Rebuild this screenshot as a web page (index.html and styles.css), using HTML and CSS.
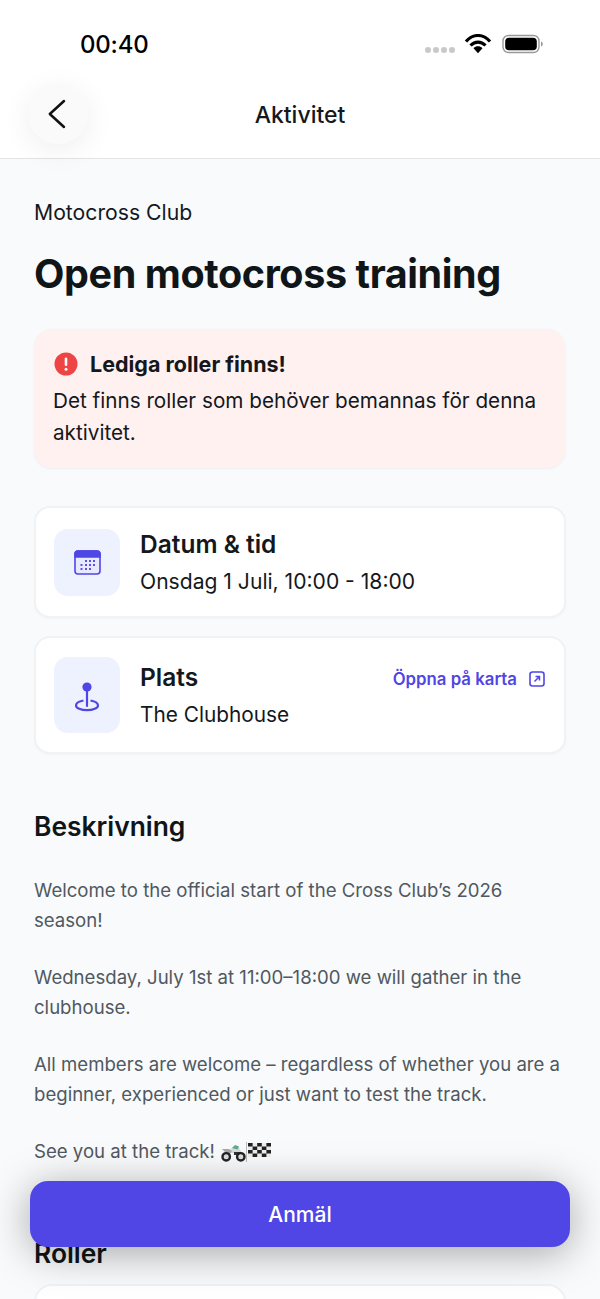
FILE: index.html
```html
<!DOCTYPE html>
<html lang="sv">
<head>
<meta charset="utf-8">
<title>Aktivitet</title>
<link rel="stylesheet" href="styles.css">
</head>
<body>
<div class="screen">
  <header class="top">
    <div class="status">
      <span class="time">00:40</span>
      <div class="status-icons">
        <span class="signal"><i></i><i></i><i></i><i></i></span>
        <svg class="wifi" width="28" height="20" viewBox="0 0 28 20"><path d="M2 7.500C9-.5 19-.5 26 7.500" fill="none" stroke="#000" stroke-width="3.200"/><path d="M6.500 11.500c4.500-4.600 10.500-4.600 15 0" fill="none" stroke="#000" stroke-width="3.200"/><path d="M9.500 14.300c2.800-2.600 6.200-2.600 9 0L14 19.200z" fill="#000"/></svg>
        <svg class="battery" width="42" height="20" viewBox="0 0 42 20"><rect x="1" y="1.500" width="36" height="17" rx="5.500" fill="none" stroke="#999" stroke-width="1.400"/><rect x="3.200" y="3.700" width="31.600" height="12.600" rx="3.800" fill="#000"/><path d="M39 7.500c1.300.4 1.800 1.300 1.800 2.500s-.5 2.100-1.800 2.500z" fill="#999"/></svg>
      </div>
    </div>
    <nav class="nav">
      <button class="back" aria-label="Tillbaka">
        <svg width="22" height="32" viewBox="0 0 22 32"><path d="M17 3 2.800 16 17 29" fill="none" stroke="#111" stroke-width="2.500" stroke-linecap="round" stroke-linejoin="round"/></svg>
      </button>
      <h2 class="nav-title">Aktivitet</h2>
    </nav>
  </header>

  <main class="content">
    <p class="club">Motocross Club</p>
    <h1 class="title">Open motocross training</h1>

    <section class="alert">
      <div class="alert-head">
        <svg width="24" height="24" viewBox="0 0 24 24"><circle cx="12" cy="12" r="11.500" fill="#ef4444"/><rect x="10.700" y="5.500" width="2.600" height="8.500" rx="1.300" fill="#fff"/><circle cx="12" cy="17.200" r="1.500" fill="#fff"/></svg>
        <strong>Lediga roller finns!</strong>
      </div>
      <p>Det finns roller som behöver bemannas för denna aktivitet.</p>
    </section>

    <section class="card card-date">
      <div class="tile tile-date">
        <svg width="27" height="25" viewBox="0 0 27 25"><rect x="1" y="1" width="25" height="23" rx="3" fill="#e8e9fc" stroke="#4f46e5" stroke-width="1.600"/><path d="M1 7V4a3 3 0 0 1 3-3h19a3 3 0 0 1 3 3v3z" fill="#4f46e5" stroke="#4f46e5" stroke-width="1.600"/><g fill="#5a52e6"><rect x="11" y="10" width="2" height="2"/><rect x="15" y="10" width="2" height="2"/><rect x="19" y="10" width="2" height="2"/><rect x="6.500" y="14" width="2" height="2"/><rect x="11" y="14" width="2" height="2"/><rect x="15" y="14" width="2" height="2"/><rect x="19" y="14" width="2" height="2"/><rect x="6.500" y="18" width="2" height="2"/><rect x="11" y="18" width="2" height="2"/><rect x="15" y="18" width="2" height="2"/></g></svg>
      </div>
      <div class="card-text">
        <h3>Datum &amp; tid</h3>
        <p>Onsdag 1 Juli, 10:00 - 18:00</p>
      </div>
    </section>

    <section class="card card-place">
      <div class="tile tile-place">
        <svg class="pin" width="26" height="30" viewBox="0 0 26 30"><path d="M9.500 18.500C5 19.400 2 21 2 23.400 2 26 6.900 28.200 13 28.200S24 26 24 23.400c0-2.400-3-4-7.500-4.900" fill="none" stroke="#4f46e5" stroke-width="2.200"/><path d="M13 7v17" stroke="#4f46e5" stroke-width="2.200" stroke-linecap="round"/><circle cx="13" cy="5" r="4.600" fill="#4f46e5"/></svg>
      </div>
      <div class="card-text">
        <h3>Plats</h3>
        <p class="place-name">The Clubhouse</p>
      </div>
      <a class="map-link">Öppna på karta
        <svg width="16" height="16" viewBox="0 0 16 16"><rect x="1" y="1" width="14" height="14" rx="2.500" fill="none" stroke="#4f46e5" stroke-width="1.600"/><path d="M5.500 10.500 10.500 5.500M6.500 5.500h4v4" fill="none" stroke="#4f46e5" stroke-width="1.500"/></svg>
      </a>
    </section>

    <section class="desc">
      <h2>Beskrivning</h2>
      <p>Welcome to the official start of the Cross Club’s 2026 season!</p>
      <p>Wednesday, July 1st at 11:00–18:00 we will gather in the clubhouse.</p>
      <p>All members are welcome – regardless of whether you are a beginner, experienced or just want to test the track.</p>
      <p>See you at the track!
        <svg class="emoji-bike" width="25" height="20" viewBox="0 0 25 20"><path d="M5 14 10 9h8l2 5" fill="none" stroke="#555" stroke-width="2"/><path d="M8 9l4-4 6 .5 2 4-3 1.500H10z" fill="#d5dbd8"/><path d="M11 6l3-3 4 1.500-1.500 3z" fill="#5fa98c"/><path d="M1 7h7l3 2-3 3-4-2z" fill="#a8a8a8"/><path d="M13 10h6l1 3h-7z" fill="#333"/><circle cx="5.200" cy="14.800" r="3.700" fill="#ddd" stroke="#222" stroke-width="2.400"/><circle cx="19.800" cy="14.800" r="3.700" fill="#ddd" stroke="#222" stroke-width="2.400"/></svg><svg class="emoji-flag" width="25" height="20" viewBox="0 0 25 20"><path d="M.5 0v20" stroke="#bbb" stroke-width="1"/><rect x="2" y="1" width="23" height="14" fill="#eee"/><g fill="#222"><rect x="2" y="1" width="4.600" height="3.500"/><rect x="11.200" y="1" width="4.600" height="3.500"/><rect x="20.400" y="1" width="4.600" height="3.500"/><rect x="6.600" y="4.500" width="4.600" height="3.500"/><rect x="15.800" y="4.500" width="4.600" height="3.500"/><rect x="2" y="8" width="4.600" height="3.500"/><rect x="11.200" y="8" width="4.600" height="3.500"/><rect x="20.400" y="8" width="4.600" height="3.500"/><rect x="6.600" y="11.500" width="4.600" height="3.500"/><rect x="15.800" y="11.500" width="4.600" height="3.500"/></g></svg>
      </p>
    </section>

    <section class="roles">
      <h2>Roller</h2>
      <div class="card role-card"></div>
    </section>
  </main>

  <button class="signup">Anmäl</button>
</div>
</body>
</html>
```
FILE: styles.css
```css
* { box-sizing: border-box; }
html, body { margin: 0; padding: 0; }
body { font-family: Inter, "Noto Sans", sans-serif; color: #14181c; background: #f8fafc; }
h1, h2, h3, p { margin: 0; }
.screen { position: relative; width: 600px; height: 1299px; overflow: hidden; background: #f8fafc; }

.top { background: #fff; border-bottom: 1px solid #e1e3e5; height: 159px; }
.status { height: 70px; display: flex; align-items: flex-end; justify-content: space-between; padding: 0 56px 10px 80px; }
.time { font-size: 24px; font-weight: 500; line-height: 30px; color: #000; letter-spacing: -.2px; }
.status-icons { display: flex; align-items: center; gap: 10px; padding-bottom: 6px; }
.signal { display: flex; gap: 2px; margin-top: 12px; margin-right: -1px; }
.signal i { width: 6px; height: 6px; border-radius: 50%; background: #c9c9c9; }
.nav { position: relative; height: 88px; display: flex; align-items: center; justify-content: center; }
.back { position: absolute; left: 28px; top: 14px; width: 60px; height: 60px; border: 0; padding: 0; border-radius: 50%; background: #fafafa; display: flex; align-items: center; justify-content: center; box-shadow: 0 6px 30px rgba(0, 0, 0, .07); }
.nav-title { font-size: 23px; font-weight: 500; line-height: 30px; color: #14181c; margin-top: 2px; }

.content { padding: 40px 34px 0; }
.club { font-size: 21.200px; line-height: 28px; color: #14181c; margin-top: -1px; }
.title { font-size: 39.500px; font-weight: 700; line-height: 48px; letter-spacing: -.4px; margin-top: 24px; color: #101518; }

.alert { margin: 31px 1px 0 0; background: #fff1f0; border-radius: 18px; padding: 19px; box-shadow: 0 1px 3px rgba(0, 0, 0, .05); }
.alert-head { display: flex; align-items: center; gap: 12px; }
.alert-head svg { margin-left: 1px; }
.alert-head strong { font-size: 21.500px; font-weight: 700; line-height: 32px; }
.alert p { font-size: 20.700px; line-height: 32px; margin-top: 5px; }

.card { background: #fff; border: 2px solid #f0f2f4; border-radius: 16px; display: flex; align-items: center; box-shadow: 0 1px 2px rgba(0, 0, 0, .03); }
.card-date { height: 112px; margin-top: 38px; padding-left: 18px; }
.card-place { height: 118px; margin-top: 18px; padding-left: 18px; }
.tile { background: #eef2fe; border-radius: 14px; width: 66px; display: flex; align-items: center; justify-content: center; }
.tile-date { height: 67px; }
.tile-place { height: 76px; }
.pin { margin-top: 3px; }
.card-text { margin-left: 20px; }
.card-text h3 { font-size: 24.500px; font-weight: 600; line-height: 32px; }
.card-text p { font-size: 21.100px; line-height: 28px; margin-top: 8px; }
.card-text .place-name { font-size: 20.800px; }
.map-link { margin-left: auto; margin-right: 19px; margin-bottom: 33px; display: flex; align-items: center; gap: 12px; font-size: 16.800px; font-weight: 600; color: #4f46e5; }

.desc { margin-top: 55px; }
.desc h2, .roles h2 { font-size: 26.400px; font-weight: 600; line-height: 34px; color: #101518; }
.desc p { font-size: 18.600px; line-height: 30px; color: #505860; margin-top: 27px; }
.desc h2 + p { margin-top: 32px; }
.emoji-bike, .emoji-flag { vertical-align: -4px; }
.emoji-bike { margin-left: 1px; }

.roles { margin-top: 70px; }
.role-card { height: 120px; margin-top: 14px; border-radius: 18px; }

.signup { position: absolute; left: 30px; top: 1181px; width: 540px; height: 66px; border: 0; border-radius: 18px; background: #4f46e5; color: #fff; font-family: inherit; font-size: 21px; font-weight: 500; box-shadow: 0 6px 40px rgba(0, 0, 0, .34); }
```
